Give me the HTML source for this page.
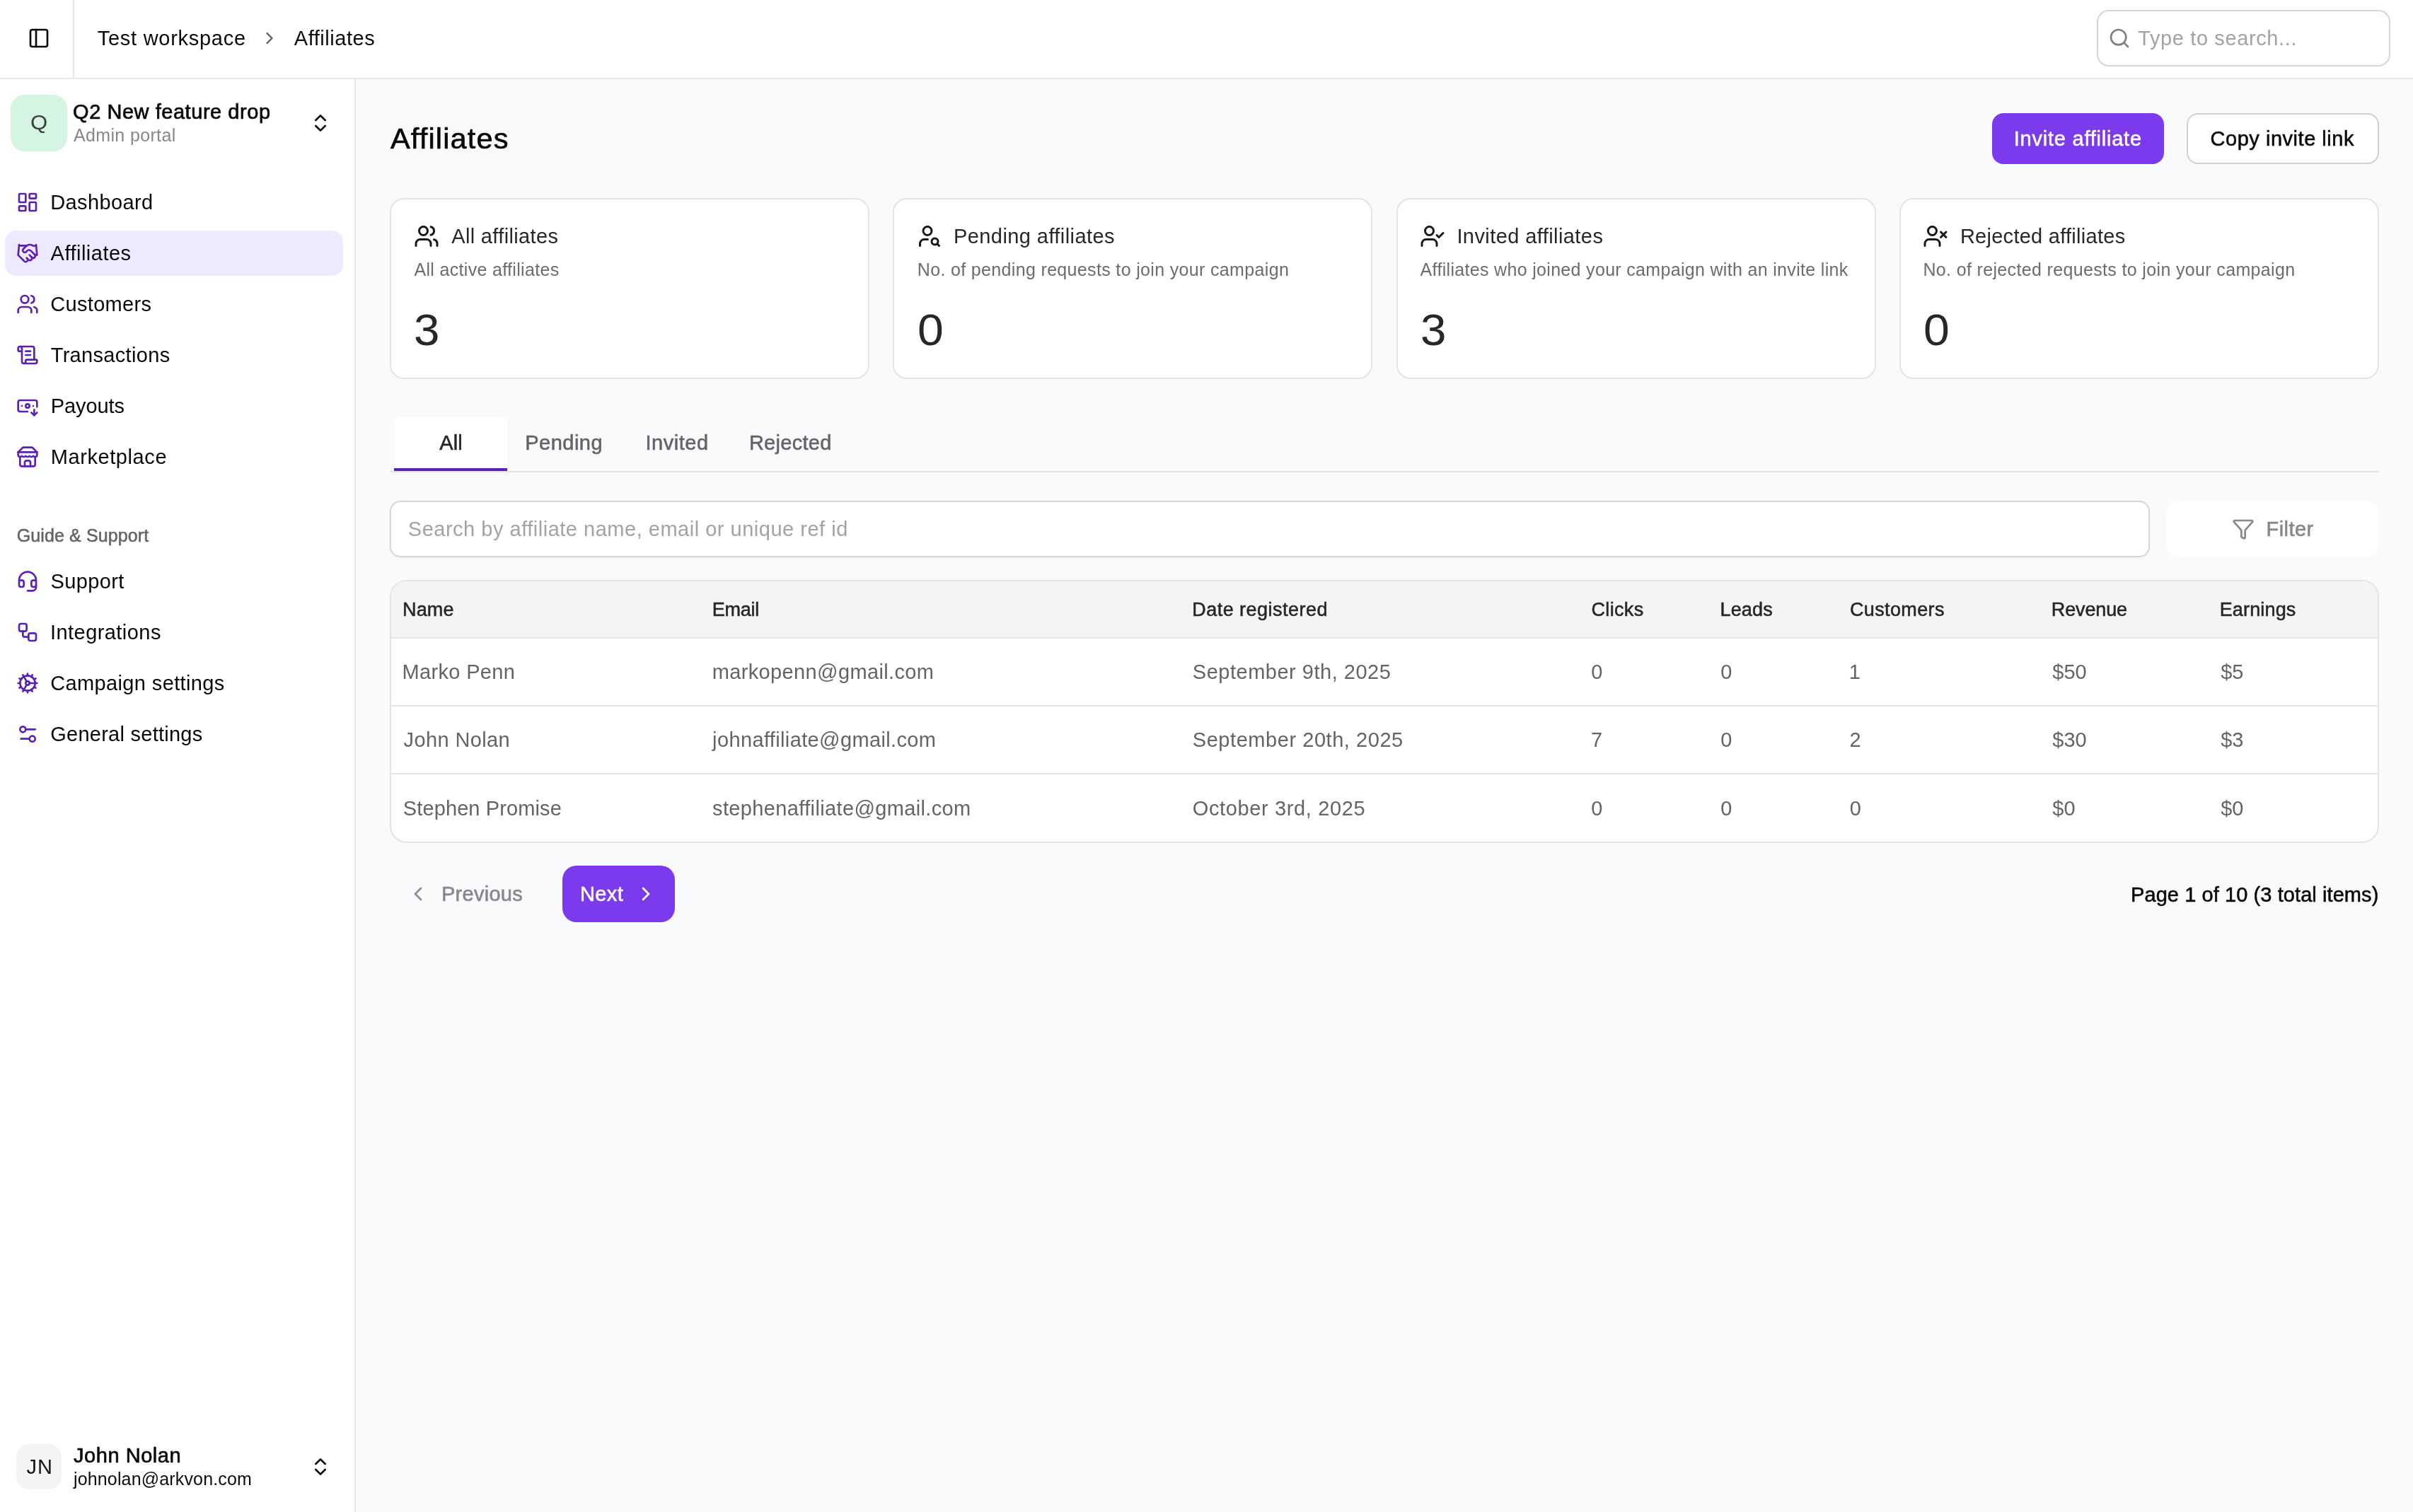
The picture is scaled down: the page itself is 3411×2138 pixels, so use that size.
<!DOCTYPE html>
<html lang="en">
<head>
<meta charset="utf-8">
<title>Affiliates</title>
<style>
html,body{margin:0;padding:0}
body{width:3411px;height:2138px;position:relative;overflow:hidden;background:#f9fafb;font-family:"Liberation Sans",Arial,sans-serif;-webkit-font-smoothing:antialiased}
.b{position:absolute;box-sizing:border-box;margin:0;padding:0}
header,aside,main{will-change:transform}
.t{position:absolute;margin:0;padding:0;line-height:1;white-space:nowrap;font-weight:400}
.m{-webkit-text-stroke:0.55px currentColor}
.s{-webkit-text-stroke:0.68px currentColor}
.i{position:absolute;display:block;overflow:visible}
a{color:inherit;text-decoration:none}
h1,p,ul,li,table,th,td{font-weight:400}
button{border:0;outline:0;font:inherit}
</style>
</head>
<body>
<header>
<div class="b" style="left:0px;top:0px;width:3411px;height:112px;background:#fff;border-bottom:2px solid #e5e7eb;"></div>
<div class="b" style="left:103px;top:0px;width:2px;height:110px;background:#e5e7eb;"></div>
<svg class="i" style="left:39px;top:38px" width="32" height="32" viewBox="0 0 24 24" fill="none" stroke="#09090b" stroke-width="2" stroke-linecap="round" stroke-linejoin="round"><rect width="18" height="18" x="3" y="3" rx="2"/><path d="M9 3v18"/></svg>
<nav aria-label="Breadcrumb">
<span class="t" style="left:137.8px;top:40px;font-size:29px;color:#0c0c10;letter-spacing:0.72px;">Test workspace</span>
<svg class="i" style="left:367px;top:40px" width="28" height="28" viewBox="0 0 24 24" fill="none" stroke="#5c5c64" stroke-width="2" stroke-linecap="round" stroke-linejoin="round"><path d="m9 18 6-6-6-6"/></svg>
<span class="t" style="left:415.8px;top:40px;font-size:29px;color:#0c0c10;letter-spacing:0.53px;">Affiliates</span>
</nav>
<div class="b" style="left:2964px;top:14px;width:415px;height:80px;background:#fff;border:2px solid #d6d6d8;border-radius:17px;"></div>
<svg class="i" style="left:2980px;top:38px" width="32" height="32" viewBox="0 0 24 24" fill="none" stroke="#808084" stroke-width="2" stroke-linecap="round" stroke-linejoin="round"><circle cx="11" cy="11" r="8"/><path d="m21 21-4.3-4.3"/></svg>
<span class="t" style="left:3022.2px;top:40px;font-size:29px;color:#a3a3a6;letter-spacing:0.62px;">Type to search...</span>
</header>
<aside>
<div class="b" style="left:0px;top:112px;width:503px;height:2026px;background:#fff;border-right:2px solid #e5e7eb;"></div>
<div class="b" style="left:15px;top:134px;width:80px;height:80px;background:#d3f5e1;border-radius:20px;"></div>
<span class="t" style="left:43.0px;top:159px;font-size:29px;color:#3f3f46;transform:scaleX(1.075);transform-origin:1.2px 50%;">Q</span>
<span class="t s" style="left:103.1px;top:144px;font-size:29px;color:#09090b;letter-spacing:0.54px;">Q2 New feature drop</span>
<span class="t" style="left:104.0px;top:179px;font-size:25px;color:#87878b;letter-spacing:0.35px;">Admin portal</span>
<svg class="i" style="left:437px;top:158px" width="32" height="32" viewBox="0 0 24 24" fill="none" stroke="#09090b" stroke-width="2" stroke-linecap="round" stroke-linejoin="round"><path d="m7 15 5 5 5-5"/><path d="m7 9 5-5 5 5"/></svg>
<div class="b" style="left:7px;top:326px;width:478px;height:64px;background:#ede9fe;border-radius:16px;"></div>
<nav>
<a><svg class="i" style="left:23px;top:270px" width="32" height="32" viewBox="0 0 24 24" fill="none" stroke="#5b21b6" stroke-width="2" stroke-linecap="round" stroke-linejoin="round"><rect width="7" height="9" x="3" y="3" rx="1"/><rect width="7" height="5" x="14" y="3" rx="1"/><rect width="7" height="9" x="14" y="12" rx="1"/><rect width="7" height="5" x="3" y="16" rx="1"/></svg><span class="t" style="left:71.2px;top:272px;font-size:29px;color:#09090b;letter-spacing:0.39px;">Dashboard</span></a>
<a><svg class="i" style="left:23px;top:342px" width="32" height="32" viewBox="0 0 24 24" fill="none" stroke="#5b21b6" stroke-width="2" stroke-linecap="round" stroke-linejoin="round"><path d="m11 17 2 2a1 1 0 1 0 3-3"/><path d="m14 14 2.5 2.5a1 1 0 1 0 3-3l-3.88-3.88a3 3 0 0 0-4.24 0l-.88.88a1 1 0 1 1-3-3l2.81-2.81a5.79 5.79 0 0 1 7.06-.87l.47.28a2 2 0 0 0 1.42.25L21 4"/><path d="m21 3 1 11h-2"/><path d="M3 3 2 14l6.5 6.5a1 1 0 1 0 3-3"/><path d="M3 4h8"/></svg><span class="t" style="left:71.6px;top:344px;font-size:29px;color:#09090b;letter-spacing:0.49px;">Affiliates</span></a>
<a><svg class="i" style="left:23px;top:414px" width="32" height="32" viewBox="0 0 24 24" fill="none" stroke="#5b21b6" stroke-width="2" stroke-linecap="round" stroke-linejoin="round"><path d="M16 21v-2a4 4 0 0 0-4-4H6a4 4 0 0 0-4 4v2"/><circle cx="9" cy="7" r="4"/><path d="M22 21v-2a4 4 0 0 0-3-3.87"/><path d="M16 3.13a4 4 0 0 1 0 7.75"/></svg><span class="t" style="left:71.3px;top:416px;font-size:29px;color:#09090b;letter-spacing:0.31px;">Customers</span></a>
<a><svg class="i" style="left:23px;top:486px" width="32" height="32" viewBox="0 0 24 24" fill="none" stroke="#5b21b6" stroke-width="2" stroke-linecap="round" stroke-linejoin="round"><path d="M15 12h-5"/><path d="M15 8h-5"/><path d="M19 17V5a2 2 0 0 0-2-2H4"/><path d="M8 21h12a2 2 0 0 0 2-2v-1a1 1 0 0 0-1-1H11a1 1 0 0 0-1 1v1a2 2 0 1 1-4 0V5a2 2 0 1 0-4 0v2a1 1 0 0 0 1 1h3"/></svg><span class="t" style="left:71.7px;top:488px;font-size:29px;color:#09090b;letter-spacing:0.32px;">Transactions</span></a>
<a><svg class="i" style="left:23px;top:558px" width="32" height="32" viewBox="0 0 24 24" fill="none" stroke="#5b21b6" stroke-width="2" stroke-linecap="round" stroke-linejoin="round"><path d="M12 18H4a2 2 0 0 1-2-2V8a2 2 0 0 1 2-2h16a2 2 0 0 1 2 2v5"/><path d="m16 19 3 3 3-3"/><path d="M18 12h.01"/><path d="M19 16v6"/><path d="M6 12h.01"/><circle cx="12" cy="12" r="2"/></svg><span class="t" style="left:71.7px;top:560px;font-size:29px;color:#09090b;letter-spacing:-0.09px;">Payouts</span></a>
<a><svg class="i" style="left:23px;top:630px" width="32" height="32" viewBox="0 0 24 24" fill="none" stroke="#5b21b6" stroke-width="2" stroke-linecap="round" stroke-linejoin="round"><path d="m2 7 4.41-4.41A2 2 0 0 1 7.83 2h8.34a2 2 0 0 1 1.42.59L22 7"/><path d="M4 12v8a2 2 0 0 0 2 2h12a2 2 0 0 0 2-2v-8"/><path d="M15 22v-4a2 2 0 0 0-2-2h-2a2 2 0 0 0-2 2v4"/><path d="M2 7h20"/><path d="M22 7v3a2 2 0 0 1-2 2a2.7 2.7 0 0 1-1.59-.63.7.7 0 0 0-.82 0A2.7 2.7 0 0 1 16 12a2.7 2.7 0 0 1-1.59-.63.7.7 0 0 0-.82 0A2.7 2.7 0 0 1 12 12a2.7 2.7 0 0 1-1.59-.63.7.7 0 0 0-.82 0A2.7 2.7 0 0 1 8 12a2.7 2.7 0 0 1-1.59-.63.7.7 0 0 0-.82 0A2.7 2.7 0 0 1 4 12a2 2 0 0 1-2-2V7"/></svg><span class="t" style="left:71.7px;top:632px;font-size:29px;color:#09090b;letter-spacing:0.59px;">Marketplace</span></a>
<span class="t m" style="left:23.7px;top:745px;font-size:25px;color:#646468;letter-spacing:0.12px;">Guide &amp; Support</span>
<a><svg class="i" style="left:23px;top:806px" width="32" height="32" viewBox="0 0 24 24" fill="none" stroke="#5b21b6" stroke-width="2" stroke-linecap="round" stroke-linejoin="round"><path d="M3 11h3a2 2 0 0 1 2 2v3a2 2 0 0 1-2 2H5a2 2 0 0 1-2-2v-5Zm0 0a9 9 0 1 1 18 0m0 0v5a2 2 0 0 1-2 2h-1a2 2 0 0 1-2-2v-3a2 2 0 0 1 2-2h3Z"/><path d="M21 16v2a4 4 0 0 1-4 4h-5"/></svg><span class="t" style="left:71.4px;top:808px;font-size:29px;color:#09090b;letter-spacing:0.41px;">Support</span></a>
<a><svg class="i" style="left:23px;top:878px" width="32" height="32" viewBox="0 0 24 24" fill="none" stroke="#5b21b6" stroke-width="2" stroke-linecap="round" stroke-linejoin="round"><rect width="8" height="8" x="3" y="3" rx="2"/><path d="M7 11v4a2 2 0 0 0 2 2h4"/><rect width="8" height="8" x="13" y="13" rx="2"/></svg><span class="t" style="left:71.0px;top:880px;font-size:29px;color:#09090b;letter-spacing:0.44px;">Integrations</span></a>
<a><svg class="i" style="left:23px;top:950px" width="32" height="32" viewBox="0 0 24 24" fill="none" stroke="#5b21b6" stroke-width="2" stroke-linecap="round" stroke-linejoin="round"><path d="M12 20a8 8 0 1 0 0-16 8 8 0 0 0 0 16Z"/><path d="M12 14a2 2 0 1 0 0-4 2 2 0 0 0 0 4Z"/><path d="M12 2v2"/><path d="M12 22v-2"/><path d="m17 20.660-1-1.730"/><path d="M11 10.270 7 3.340"/><path d="m20.660 17-1.730-1"/><path d="m3.340 7 1.730 1"/><path d="M14 12h8"/><path d="M2 12h2"/><path d="m20.660 7-1.730 1"/><path d="m3.340 17 1.730-1"/><path d="m17 3.340-1 1.730"/><path d="m11 13.730-4 6.930"/></svg><span class="t" style="left:71.2px;top:952px;font-size:29px;color:#09090b;letter-spacing:0.37px;">Campaign settings</span></a>
<a><svg class="i" style="left:23px;top:1022px" width="32" height="32" viewBox="0 0 24 24" fill="none" stroke="#5b21b6" stroke-width="2" stroke-linecap="round" stroke-linejoin="round"><path d="M20 7h-9"/><path d="M14 17H5"/><circle cx="17" cy="17" r="3"/><circle cx="7" cy="7" r="3"/></svg><span class="t" style="left:71.2px;top:1024px;font-size:29px;color:#09090b;letter-spacing:0.26px;">General settings</span></a>
</nav>
<div class="b" style="left:23px;top:2042px;width:64px;height:64px;background:#f4f4f5;border-radius:18px;"></div>
<span class="t" style="left:37.6px;top:2060px;font-size:29px;color:#131316;letter-spacing:0.85px;">JN</span>
<span class="t s" style="left:104.0px;top:2044px;font-size:29px;color:#09090b;letter-spacing:0.54px;">John Nolan</span>
<span class="t" style="left:104.0px;top:2079px;font-size:25px;color:#0c0c10;letter-spacing:0.15px;">johnolan@arkvon.com</span>
<svg class="i" style="left:437px;top:2058px" width="32" height="32" viewBox="0 0 24 24" fill="none" stroke="#09090b" stroke-width="2" stroke-linecap="round" stroke-linejoin="round"><path d="m7 15 5 5 5-5"/><path d="m7 9 5-5 5 5"/></svg>
</aside>
<main>
<h1 class="t s" style="left:551.9px;top:175px;font-size:41.5px;color:#09090b;letter-spacing:1.17px;">Affiliates</h1>
<button class="b" style="left:2816px;top:160px;width:243px;height:72px;background:#7c3aed;border-radius:16px;"></button>
<span class="t m" style="left:2846.8px;top:182px;font-size:29px;color:#ffffff;letter-spacing:0.77px;">Invite affiliate</span>
<button class="b" style="left:3091px;top:160px;width:272px;height:72px;background:#fff;border:2px solid #cfcfd4;border-radius:16px;"></button>
<span class="t m" style="left:3124.5px;top:182px;font-size:29px;color:#09090b;letter-spacing:0.53px;">Copy invite link</span>
<section>
<div class="b" style="left:551px;top:280px;width:678px;height:256px;background:#fff;border:2px solid #e4e4e7;border-radius:20px;"></div>
<svg class="i" style="left:584.5px;top:316px" width="36" height="36" viewBox="0 0 24 24" fill="none" stroke="#18181b" stroke-width="2" stroke-linecap="round" stroke-linejoin="round"><path d="M16 21v-2a4 4 0 0 0-4-4H6a4 4 0 0 0-4 4v2"/><circle cx="9" cy="7" r="4"/><path d="M22 21v-2a4 4 0 0 0-3-3.87"/><path d="M16 3.13a4 4 0 0 1 0 7.75"/></svg>
<span class="t" style="left:638.2px;top:320px;font-size:29px;color:#27272a;letter-spacing:0.35px;">All affiliates</span>
<span class="t" style="left:585.5px;top:369px;font-size:25px;color:#6c6c70;letter-spacing:0.32px;">All active affiliates</span>
<span class="t" style="left:585.4px;top:435px;font-size:63.5px;color:#27272a;transform:scaleX(1.031);transform-origin:2.4px 50%;">3</span>
<div class="b" style="left:1262px;top:280px;width:678px;height:256px;background:#fff;border:2px solid #e4e4e7;border-radius:20px;"></div>
<svg class="i" style="left:1295.5px;top:316px" width="36" height="36" viewBox="0 0 24 24" fill="none" stroke="#18181b" stroke-width="2" stroke-linecap="round" stroke-linejoin="round"><circle cx="10" cy="7" r="4"/><path d="M10.300 15H7a4 4 0 0 0-4 4v2"/><circle cx="17" cy="17" r="3"/><path d="m21 21-1.900-1.900"/></svg>
<span class="t" style="left:1348.0px;top:320px;font-size:29px;color:#27272a;letter-spacing:0.42px;">Pending affiliates</span>
<span class="t" style="left:1296.8px;top:369px;font-size:25px;color:#6c6c70;letter-spacing:0.34px;">No. of pending requests to join your campaign</span>
<span class="t" style="left:1296.8px;top:435px;font-size:63.5px;color:#27272a;transform:scaleX(1.043);transform-origin:2.4px 50%;">0</span>
<div class="b" style="left:1974px;top:280px;width:678px;height:256px;background:#fff;border:2px solid #e4e4e7;border-radius:20px;"></div>
<svg class="i" style="left:2006.5px;top:316px" width="36" height="36" viewBox="0 0 24 24" fill="none" stroke="#18181b" stroke-width="2" stroke-linecap="round" stroke-linejoin="round"><path d="m16 11 2 2 4-4"/><path d="M16 21v-2a4 4 0 0 0-4-4H6a4 4 0 0 0-4 4v2"/><circle cx="9" cy="7" r="4"/></svg>
<span class="t" style="left:2059.4px;top:320px;font-size:29px;color:#27272a;letter-spacing:0.42px;">Invited affiliates</span>
<span class="t" style="left:2007.6px;top:369px;font-size:25px;color:#6c6c70;letter-spacing:0.32px;">Affiliates who joined your campaign with an invite link</span>
<span class="t" style="left:2007.5px;top:435px;font-size:63.5px;color:#27272a;transform:scaleX(1.031);transform-origin:2.4px 50%;">3</span>
<div class="b" style="left:2685px;top:280px;width:678px;height:256px;background:#fff;border:2px solid #e4e4e7;border-radius:20px;"></div>
<svg class="i" style="left:2717.5px;top:316px" width="36" height="36" viewBox="0 0 24 24" fill="none" stroke="#18181b" stroke-width="2" stroke-linecap="round" stroke-linejoin="round"><path d="M16 21v-2a4 4 0 0 0-4-4H6a4 4 0 0 0-4 4v2"/><circle cx="9" cy="7" r="4"/><path d="m17 8 5 5"/><path d="m22 8-5 5"/></svg>
<span class="t" style="left:2770.9px;top:320px;font-size:29px;color:#27272a;letter-spacing:0.27px;">Rejected affiliates</span>
<span class="t" style="left:2718.4px;top:369px;font-size:25px;color:#6c6c70;letter-spacing:0.35px;">No. of rejected requests to join your campaign</span>
<span class="t" style="left:2718.8px;top:435px;font-size:63.5px;color:#27272a;transform:scaleX(1.043);transform-origin:2.4px 50%;">0</span>
</section>
<section>
<div class="b" style="left:551px;top:666px;width:2812px;height:2px;background:#e4e4e7;"></div>
<div class="b" style="left:557px;top:590px;width:160px;height:76px;background:#fff;border-bottom:4px solid #5b21b6;"></div>
<span class="t m" style="left:621.3px;top:612px;font-size:29px;color:#27272a;letter-spacing:0.04px;">All</span>
<span class="t m" style="left:742.3px;top:612px;font-size:29px;color:#646468;letter-spacing:0.47px;">Pending</span>
<span class="t m" style="left:912.4px;top:612px;font-size:29px;color:#646468;letter-spacing:0.55px;">Invited</span>
<span class="t m" style="left:1058.9px;top:612px;font-size:29px;color:#646468;letter-spacing:0.28px;">Rejected</span>
<div class="b" style="left:551px;top:708px;width:2488px;height:80px;background:#fff;border:2px solid #d6d6da;border-radius:15px;box-shadow:0 2px 3px rgba(0,0,0,0.04);"></div>
<span class="t" style="left:576.8px;top:734px;font-size:29px;color:#a3a3a6;letter-spacing:0.51px;">Search by affiliate name, email or unique ref id</span>
<div class="b" style="left:3063px;top:708px;width:300px;height:80px;background:#fff;border-radius:18px;"></div>
<svg class="i" style="left:3154.5px;top:731.5px" width="32" height="32" viewBox="0 0 24 24" fill="none" stroke="#87878b" stroke-width="2" stroke-linecap="round" stroke-linejoin="round"><path d="M10 20a1 1 0 0 0 .553.895l2 1A1 1 0 0 0 14 21v-7a2 2 0 0 1 .517-1.341L21.740 4.670A1 1 0 0 0 21 3H3a1 1 0 0 0-.742 1.670l7.225 7.989A2 2 0 0 1 10 14z"/></svg>
<span class="t m" style="left:3203.5px;top:734px;font-size:29px;color:#87878b;letter-spacing:0.45px;">Filter</span>
</section>
<section>
<div class="b" style="left:551px;top:820px;width:2812px;height:372px;background:#fff;border:2px solid #e4e4e7;border-radius:24px;overflow:hidden;"><div class="b" style="left:0;top:0;width:100%;height:80.5px;background:#f4f4f5;border-bottom:2px solid #e4e4e7"></div><div class="b" style="left:0;top:174.5px;width:100%;height:2px;background:#e4e4e7"></div><div class="b" style="left:0;top:270.5px;width:100%;height:2px;background:#e4e4e7"></div></div>
<div role="table">
<div role="row">
<span role="columnheader" class="t m" style="left:569.1px;top:849px;font-size:27px;color:#27272a;letter-spacing:0.10px;">Name</span>
<span role="columnheader" class="t m" style="left:1006.8px;top:849px;font-size:27px;color:#27272a;letter-spacing:-0.27px;">Email</span>
<span role="columnheader" class="t m" style="left:1685.2px;top:849px;font-size:27px;color:#27272a;letter-spacing:0.48px;">Date registered</span>
<span role="columnheader" class="t m" style="left:2249.4px;top:849px;font-size:27px;color:#27272a;letter-spacing:0.37px;">Clicks</span>
<span role="columnheader" class="t m" style="left:2431.5px;top:849px;font-size:27px;color:#27272a;letter-spacing:0.16px;">Leads</span>
<span role="columnheader" class="t m" style="left:2614.9px;top:849px;font-size:27px;color:#27272a;letter-spacing:0.38px;">Customers</span>
<span role="columnheader" class="t m" style="left:2899.8px;top:849px;font-size:27px;color:#27272a;letter-spacing:-0.13px;">Revenue</span>
<span role="columnheader" class="t m" style="left:3137.7px;top:849px;font-size:27px;color:#27272a;letter-spacing:0.16px;">Earnings</span>
</div>
<div role="row">
<span role="cell" class="t" style="left:568.6px;top:936px;font-size:29px;color:#646468;letter-spacing:0.33px;">Marko Penn</span>
<span role="cell" class="t" style="left:1006.7px;top:936px;font-size:29px;color:#646468;letter-spacing:0.37px;">markopenn@gmail.com</span>
<span role="cell" class="t" style="left:1685.8px;top:936px;font-size:29px;color:#646468;letter-spacing:0.51px;">September 9th, 2025</span>
<span role="cell" class="t" style="left:2249.3px;top:936px;font-size:29px;color:#646468;">0</span>
<span role="cell" class="t" style="left:2432.3px;top:936px;font-size:29px;color:#646468;">0</span>
<span role="cell" class="t" style="left:2613.8px;top:936px;font-size:29px;color:#646468;">1</span>
<span role="cell" class="t" style="left:2901.3px;top:936px;font-size:29px;color:#646468;">$50</span>
<span role="cell" class="t" style="left:3139.2px;top:936px;font-size:29px;color:#646468;">$5</span>
</div>
<div role="row">
<span role="cell" class="t" style="left:570.6px;top:1032px;font-size:29px;color:#646468;letter-spacing:0.38px;">John Nolan</span>
<span role="cell" class="t" style="left:1007.1px;top:1032px;font-size:29px;color:#646468;letter-spacing:0.37px;">johnaffiliate@gmail.com</span>
<span role="cell" class="t" style="left:1685.8px;top:1032px;font-size:29px;color:#646468;letter-spacing:0.55px;">September 20th, 2025</span>
<span role="cell" class="t" style="left:2249.0px;top:1032px;font-size:29px;color:#646468;">7</span>
<span role="cell" class="t" style="left:2432.3px;top:1032px;font-size:29px;color:#646468;">0</span>
<span role="cell" class="t" style="left:2614.5px;top:1032px;font-size:29px;color:#646468;">2</span>
<span role="cell" class="t" style="left:2901.3px;top:1032px;font-size:29px;color:#646468;">$30</span>
<span role="cell" class="t" style="left:3139.2px;top:1032px;font-size:29px;color:#646468;">$3</span>
</div>
<div role="row">
<span role="cell" class="t" style="left:569.8px;top:1129px;font-size:29px;color:#646468;letter-spacing:0.11px;">Stephen Promise</span>
<span role="cell" class="t" style="left:1007.1px;top:1129px;font-size:29px;color:#646468;letter-spacing:0.36px;">stephenaffiliate@gmail.com</span>
<span role="cell" class="t" style="left:1685.8px;top:1129px;font-size:29px;color:#646468;letter-spacing:0.63px;">October 3rd, 2025</span>
<span role="cell" class="t" style="left:2249.3px;top:1129px;font-size:29px;color:#646468;">0</span>
<span role="cell" class="t" style="left:2432.3px;top:1129px;font-size:29px;color:#646468;">0</span>
<span role="cell" class="t" style="left:2614.8px;top:1129px;font-size:29px;color:#646468;">0</span>
<span role="cell" class="t" style="left:2901.3px;top:1129px;font-size:29px;color:#646468;">$0</span>
<span role="cell" class="t" style="left:3139.2px;top:1129px;font-size:29px;color:#646468;">$0</span>
</div>
</div>
<svg class="i" style="left:575px;top:1248px" width="32" height="32" viewBox="0 0 24 24" fill="none" stroke="#8b8b92" stroke-width="2" stroke-linecap="round" stroke-linejoin="round"><path d="m15 18-6-6 6-6"/></svg>
<span class="t m" style="left:623.9px;top:1250px;font-size:29px;color:#87878b;letter-spacing:0.29px;">Previous</span>
<button class="b" style="left:795px;top:1224px;width:159px;height:80px;background:#7c3aed;border-radius:20px;"></button>
<span class="t m" style="left:820.0px;top:1250px;font-size:29px;color:#ffffff;letter-spacing:0.38px;">Next</span>
<svg class="i" style="left:897px;top:1248px" width="32" height="32" viewBox="0 0 24 24" fill="none" stroke="#ffffff" stroke-width="2" stroke-linecap="round" stroke-linejoin="round"><path d="m9 18 6-6-6-6"/></svg>
<span class="t m" style="left:3012.0px;top:1251px;font-size:29px;color:#09090b;letter-spacing:0.08px;">Page 1 of 10 (3 total items)</span>
</section>
</main>
</body>
</html>
